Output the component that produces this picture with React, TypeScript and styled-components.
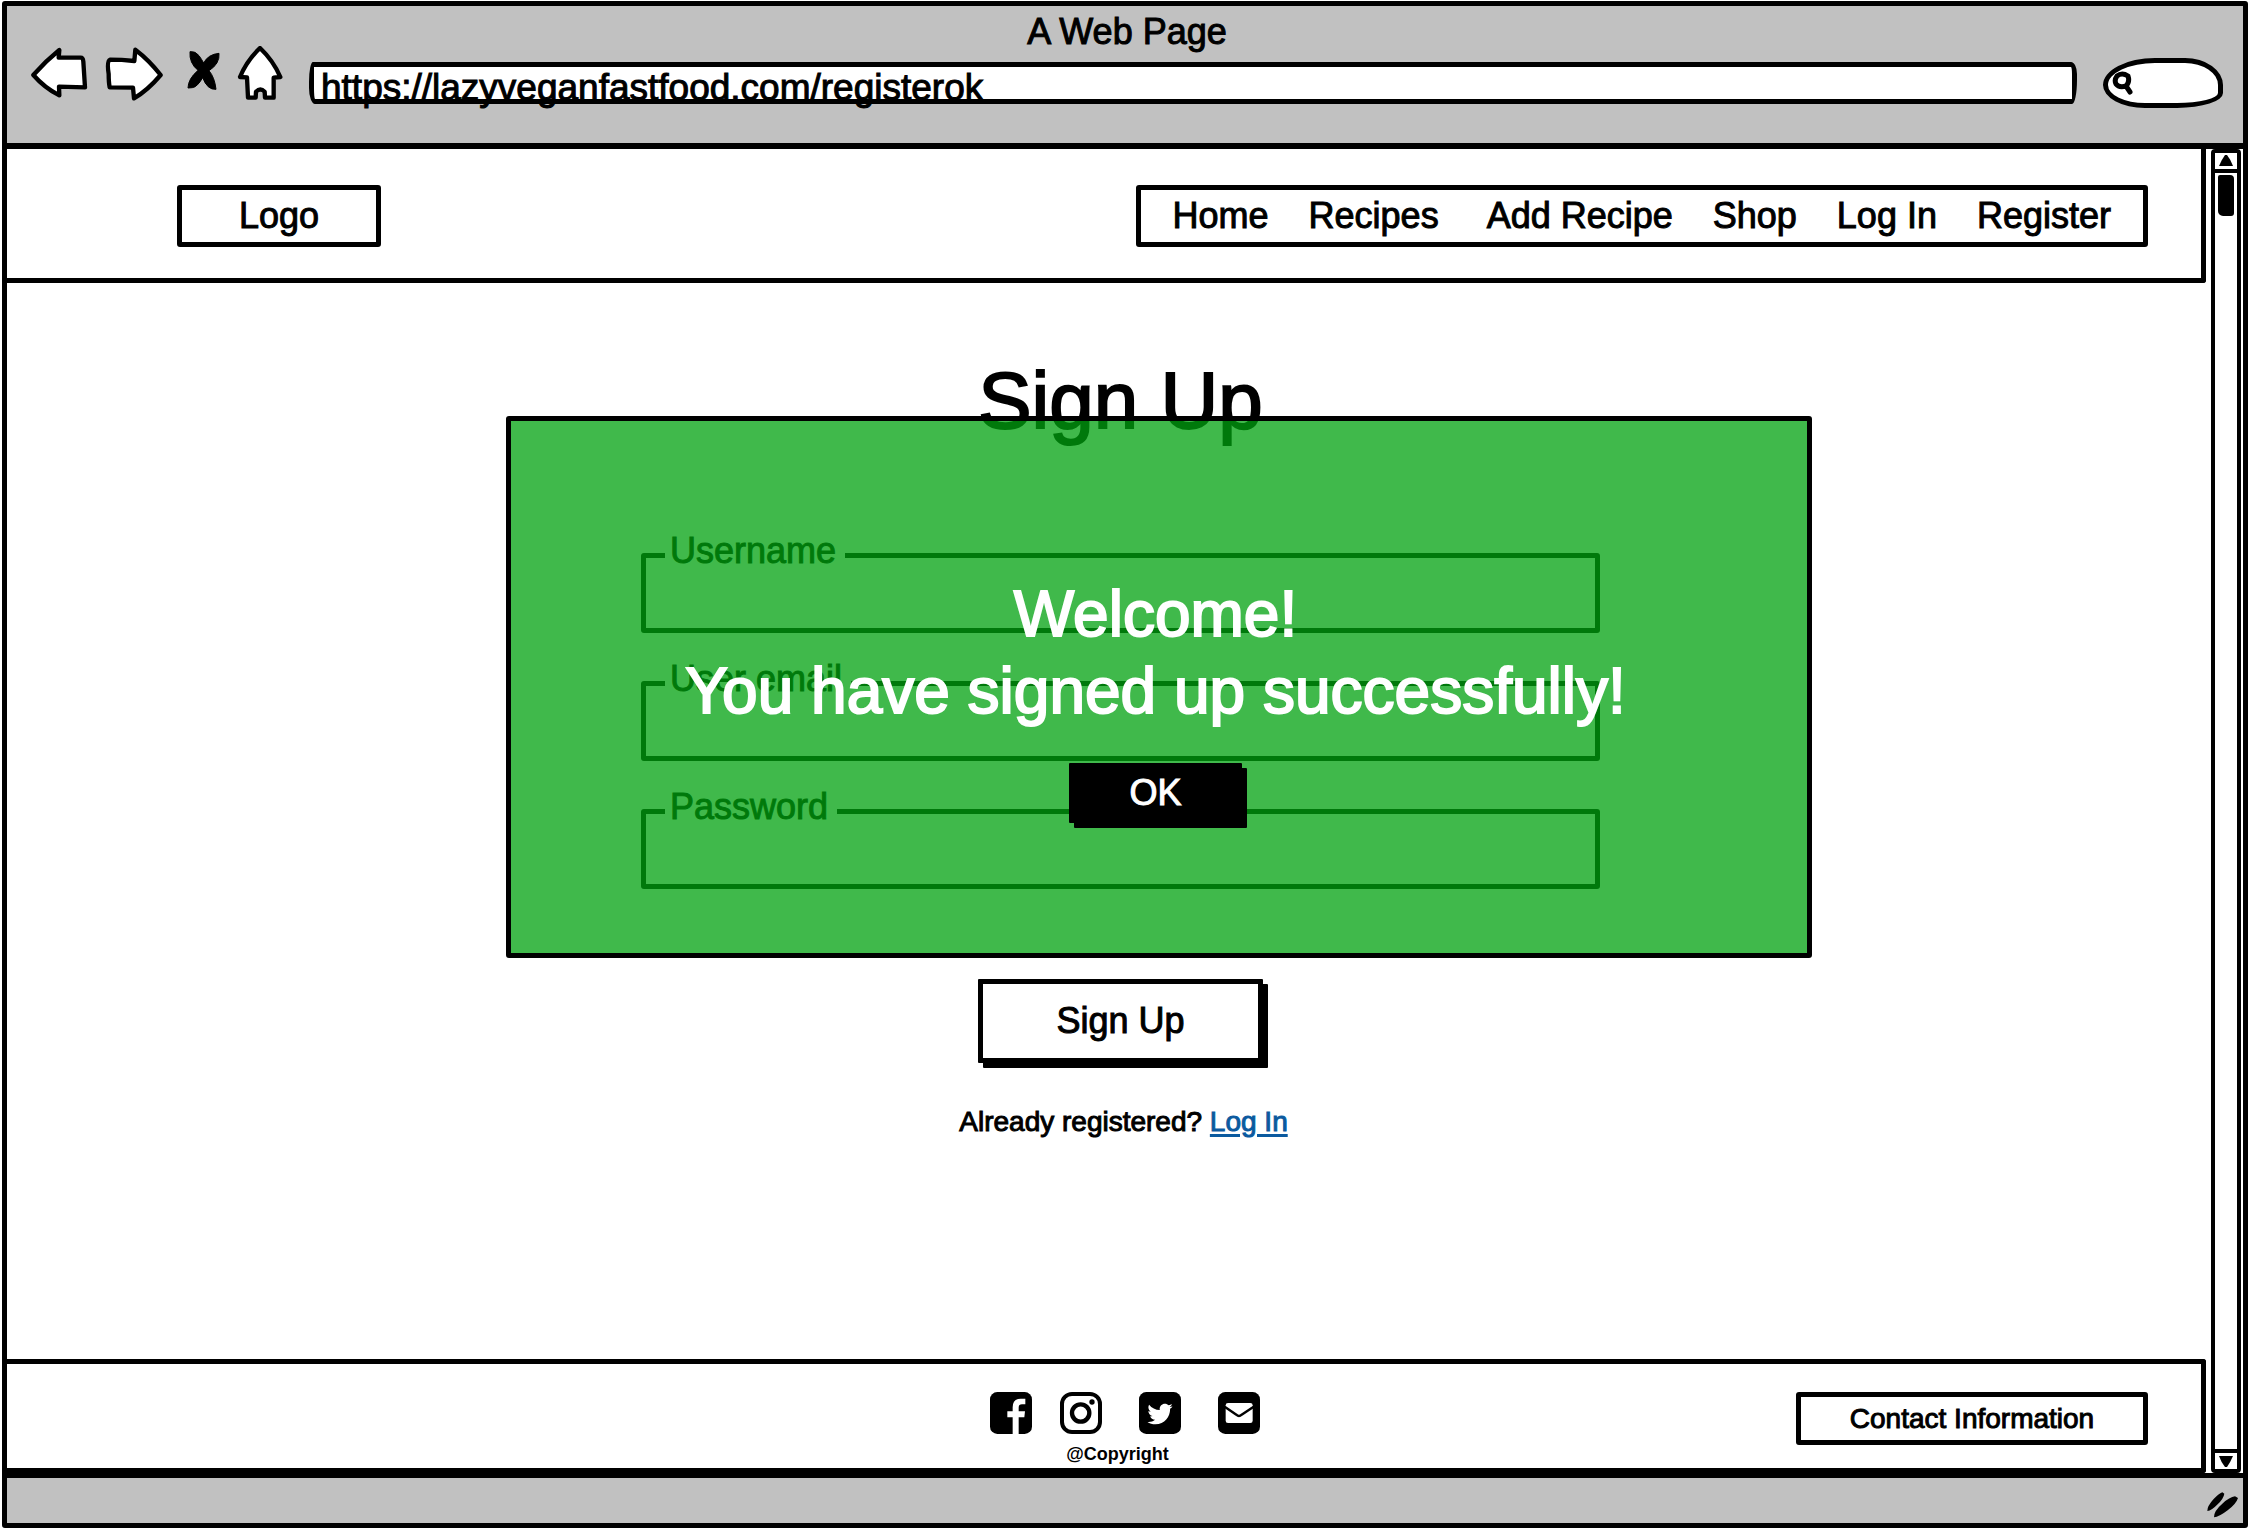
import React from "react";
import styled, { createGlobalStyle } from "styled-components";

const INK = "#000000";
const CHROME = "#c1c1c1";
const LINE = "5px solid " + INK;

const GlobalStyle = createGlobalStyle`
  *, *::before, *::after { box-sizing: border-box; }
  body {
    margin: 0;
    background: #ffffff;
    color: ${INK};
    font-family: "Liberation Sans", Arial, sans-serif;
    font-size: 36px;
    -webkit-text-stroke: 1px currentColor;
  }
  button, input { font: inherit; color: inherit; }
  svg { display: block; }
`;

const Page = styled.div`
  min-height: 100vh;
  padding: 1px 2px 2px;
  display: flex;
  flex-direction: column;
`;

const BrowserWindow = styled.div`
  flex: 1;
  display: flex;
  flex-direction: column;
  border: ${LINE};
  border-radius: 3px;
`;

/* ---------- browser chrome ---------- */

const Chrome = styled.div`
  display: grid;
  grid-template-columns: auto 1fr auto;
  grid-template-rows: 52px 50px;
  column-gap: 26px;
  align-items: center;
  padding: 0 20px 35px 24px;
  background: ${CHROME};
  border-bottom: 6px solid ${INK};
`;

const WindowTitle = styled.div`
  grid-column: 1 / -1;
  grid-row: 1;
  text-align: center;
  line-height: 52px;
`;

const Controls = styled.div`
  grid-column: 1;
  grid-row: 1 / 3;
  display: flex;
  gap: 16px;
  margin-top: 34px;
`;

const IconButton = styled.button`
  padding: 0;
  border: 0;
  background: none;
  cursor: pointer;
`;

const AddressBar = styled.div`
  grid-column: 2;
  grid-row: 2;
  height: 42px;
  border: ${LINE};
  border-radius: 4px 6px 5px 6px / 20px 12px 24px 16px;
  background: #ffffff;
`;

const AddressInput = styled.input`
  display: block;
  width: 100%;
  height: 42px;
  padding: 0 0 0 7px;
  border: 0;
  outline: 0;
  background: transparent;
  font-size: 37px;
  -webkit-text-stroke: inherit;
`;

const SearchPill = styled.label`
  grid-column: 3;
  grid-row: 2;
  width: 120px;
  height: 50px;
  padding: 0 12px 0 4px;
  display: flex;
  align-items: center;
  border: ${LINE};
  border-radius: 52px 38px 46px 42px / 27px 27px 15px 23px;
  background: #ffffff;
`;

const SearchInput = styled.input`
  flex: 1;
  min-width: 0;
  border: 0;
  outline: 0;
  padding: 0;
  background: transparent;
  font-size: 18px;
`;

/* ---------- viewport ---------- */

const Viewport = styled.div`
  flex: 1;
  display: flex;
`;

const Site = styled.div`
  flex: 1;
  display: flex;
  flex-direction: column;
`;

const Header = styled.header`
  display: flex;
  justify-content: space-between;
  padding: 36px 53px 31px 170px;
  border-right: ${LINE};
  border-bottom: ${LINE};
  border-radius: 0 0 3px 0;
`;

const OutlineLink = styled.a<{ $width: number; $height: number; $size: number }>`
  width: ${(p) => p.$width}px;
  height: ${(p) => p.$height}px;
  display: flex;
  align-items: center;
  justify-content: center;
  border: ${LINE};
  border-radius: 3px;
  color: inherit;
  font-size: ${(p) => p.$size}px;
  text-decoration: none;
`;

const Nav = styled.nav`
  display: flex;
  align-items: center;
  gap: 48px;
  padding: 0 32px;
  border: ${LINE};
  border-radius: 3px;
`;

const NavGroup = styled.div`
  display: flex;
  gap: 40px;
`;

const NavLink = styled.a`
  color: inherit;
  text-decoration: none;
  white-space: nowrap;
`;

const Main = styled.main`
  position: relative;
  flex: 1;
  display: flex;
  flex-direction: column;
  align-items: center;
  padding: 72px 0 0 28px;
`;

const Heading = styled.h1`
  margin: 0;
  font-size: 80px;
  font-weight: 400;
  line-height: 92px;
  -webkit-text-stroke-width: 2px;
`;

const Form = styled.form`
  width: 959px;
  max-width: 100%;
  margin-top: 106px;
  display: flex;
  flex-direction: column;
  align-items: center;
  gap: 48px;
`;

const Field = styled.div`
  position: relative;
  width: 100%;
  height: 80px;
  border: ${LINE};
  border-radius: 3px;
`;

const FieldLabel = styled.label`
  position: absolute;
  top: -25px;
  left: 19px;
  padding: 0 9px 0 5px;
  background: #ffffff;
  line-height: 36px;
`;

const FieldInput = styled.input`
  width: 100%;
  height: 100%;
  padding: 8px 24px 0;
  border: 0;
  outline: 0;
  background: transparent;
`;

const SketchButton = styled.button<{ $solid?: boolean }>`
  width: ${(p) => (p.$solid ? 173 : 285)}px;
  height: ${(p) => (p.$solid ? 60 : 84)}px;
  padding: 0;
  border: ${LINE};
  border-radius: 1px;
  box-shadow: 5px 5px 0 ${INK};
  background: ${(p) => (p.$solid ? INK : "#ffffff")};
  color: ${(p) => (p.$solid ? "#ffffff" : INK)};
  -webkit-text-stroke: 1px currentColor;
  cursor: pointer;
`;

const SubmitRow = styled.div`
  margin-top: 42px;
`;

const Hint = styled.p`
  margin: 43px 0 0;
  padding-left: 6px;
  font-size: 28px;
  line-height: 32px;

  a {
    color: #0b5a9f;
    -webkit-text-stroke-color: #0b5a9f;
    text-decoration-thickness: 3px;
    text-underline-offset: 3px;
  }
`;

const Dialog = styled.section`
  position: absolute;
  top: 133px;
  left: calc(50% + 52px);
  transform: translateX(-50%);
  width: 1306px;
  max-width: 100%;
  height: 542px;
  padding: 155px 6px 0 0;
  display: flex;
  flex-direction: column;
  align-items: center;
  gap: 33px;
  border: ${LINE};
  border-radius: 3px;
  background: rgba(0, 161, 15, 0.75);
`;

const DialogText = styled.p`
  margin: 0;
  color: #ffffff;
  font-size: 64px;
  line-height: 77px;
  text-align: center;
  -webkit-text-stroke: 2px #ffffff;
`;

const Footer = styled.footer`
  display: grid;
  grid-template-columns: 1fr auto 1fr;
  align-items: start;
  padding: 28px 53px 4px 94px;
  border: ${LINE};
  border-left: 0;
  border-radius: 0 3px 3px 0;
`;

const FooterCenter = styled.div`
  grid-column: 2;
  display: flex;
  flex-direction: column;
  align-items: center;
  gap: 10px;
`;

const FooterEnd = styled.div`
  justify-self: end;
`;

const SocialGroup = styled.div<{ $gap: number }>`
  display: flex;
  gap: ${(p) => p.$gap}px;
`;

const SocialLink = styled.a`
  color: inherit;
`;

const Copyright = styled.small`
  padding-right: 14px;
  font-size: 18px;
  font-weight: 700;
  line-height: 20px;
  -webkit-text-stroke-width: 0;
`;

/* ---------- scrollbar and status bar ---------- */

const Scrollbar = styled.div`
  width: 30px;
  margin: 0 2px 0 5px;
  display: flex;
  flex-direction: column;
  align-items: center;
  border: 4px solid ${INK};
  border-radius: 4px;
`;

const ScrollButton = styled.button<{ $end?: boolean }>`
  width: 100%;
  height: 20px;
  padding: 0;
  display: flex;
  align-items: center;
  justify-content: center;
  border: 0 solid ${INK};
  border-width: ${(p) => (p.$end ? "4px 0 0" : "0 0 4px")};
  background: #ffffff;
`;

const ScrollTrack = styled.div`
  flex: 1;
  padding-top: 2px;
`;

const ScrollThumb = styled.div`
  width: 16px;
  height: 41px;
  border-radius: 2px 4px 3px 5px;
  background: ${INK};
`;

const StatusBar = styled.div`
  height: 50px;
  display: flex;
  justify-content: flex-end;
  align-items: flex-end;
  padding: 0 5px 5px 0;
  border-top: ${LINE};
  background: ${CHROME};
`;

/* ---------- drawings ---------- */

const controlIcons = [
  {
    name: "Back",
    width: 57,
    box: "21 31 171 168",
    path: "M28 118 Q65 76 106 43 L104 66 L170 66 Q177 66 178 78 L183 155 L105 153 L106 179 Q62 157 28 118Z",
  },
  {
    name: "Forward",
    width: 59,
    box: "240 31 177 168",
    path: "M258 72 Q292 72 331 76 L334 42 Q375 73 410 118 Q370 165 330 188 L327 156 L257 155 Q254 140 254 115 Q248 76 258 72Z",
  },
  {
    name: "Stop",
    width: 42,
    box: "465 31 126 168",
    solid: true,
    path: "M498 48 Q514 46 525 60 Q533 71 539 82 Q552 56 585 53 Q588 84 555 105 Q572 125 576 161 Q550 163 536 126 Q520 154 505 156 L492 157 Q492 130 522 104 Q495 82 498 48Z",
  },
  {
    name: "Home",
    width: 46,
    box: "639 31 138 168",
    path: "M708 37 Q748 75 769 124 L749 126 L749 186 L723 186 L722 168 Q709 155 696 168 L695 186 L672 186 L669 125 L648 124 Q668 75 708 37Z",
  },
];

const MagnifierIcon = () => (
  <svg width="22" height="24" viewBox="0 0 22 24" fill="none" stroke={INK} strokeWidth="5" strokeLinecap="round">
    <path d="M5 5 Q10 1 16 5 Q18 11 14 15 Q7 17 4 13 Q2 9 5 5Z M14 15 L18 21" />
  </svg>
);

const Triangle = ({ down }: { down?: boolean }) => (
  <svg width="14" height="12" viewBox="0 0 14 12" fill={INK}>
    <path d={down ? "M0 1 H14 Q11 8 8 12 H6 Q2 7 0 1Z" : "M0 11 Q3 4 6 0 H8 Q12 5 14 11Z"} />
  </svg>
);

const GripIcon = () => (
  <svg width="31" height="26" viewBox="0 0 93 76" fill={INK}>
    <path d="M1 56 Q0 42 20 20 Q38 2 46 0 L52 4 Q50 18 32 36 Q14 55 1 56Z" />
    <path d="M21 75 Q20 56 46 34 Q68 14 84 12 L93 17 Q88 34 62 54 Q36 74 21 75Z" />
  </svg>
);

const FacebookIcon = () => (
  <svg width="42" height="42" viewBox="0 0 126 126">
    <rect width="126" height="126" rx="22" fill={INK} />
    <path
      fill="#ffffff"
      d="M68 126 V76 H52 V58 H68 V46 Q68 20 92 20 H106 V37 H96 Q86 37 86 47 V58 H105 L103 76 H86 V126Z"
    />
  </svg>
);

const InstagramIcon = () => (
  <svg width="42" height="42" viewBox="0 0 126 126" fill="none" stroke={INK}>
    <rect x="6" y="6" width="114" height="114" rx="30" strokeWidth="12" />
    <circle cx="62" cy="63" r="26" strokeWidth="13" />
    <circle cx="96" cy="30" r="8" fill={INK} stroke="none" />
  </svg>
);

const TwitterIcon = () => (
  <svg width="42" height="42" viewBox="0 0 126 126">
    <rect width="126" height="126" rx="22" fill={INK} />
    <svg x="25" y="28" width="76" height="76" viewBox="0 0 512 512">
      <path
        fill="#ffffff"
        d="M459.37 151.716c.325 4.548.325 9.097.325 13.645 0 138.72-105.583 298.558-298.558 298.558-59.452 0-114.68-17.219-161.137-47.106 8.447.974 16.568 1.299 25.34 1.299 49.055 0 94.213-16.568 130.274-44.832-46.132-.975-84.792-31.188-98.112-72.772 6.498.974 12.995 1.624 19.818 1.624 9.421 0 18.843-1.3 27.614-3.573-48.081-9.747-84.143-51.98-84.143-102.985v-1.299c13.969 7.797 30.214 12.67 47.431 13.319-28.264-18.843-46.781-51.005-46.781-87.391 0-19.492 5.197-37.36 14.294-52.954 51.655 63.675 129.3 105.258 216.365 109.807-1.624-7.797-2.599-15.918-2.599-24.04 0-57.828 46.782-104.934 104.934-104.934 30.213 0 57.502 12.67 76.67 33.137 23.715-4.548 46.456-13.32 66.599-25.34-7.798 24.366-24.366 44.833-46.132 57.827 21.117-2.273 41.584-8.122 60.426-16.243-14.292 20.791-32.161 39.308-52.628 54.253z"
      />
    </svg>
  </svg>
);

const MailIcon = () => (
  <svg width="42" height="42" viewBox="0 0 126 126">
    <rect width="126" height="126" rx="22" fill={INK} />
    <rect x="23" y="33" width="81" height="60" rx="7" fill="#ffffff" />
    <path d="M20 44 L55 68 Q63 76 71 68 L107 44" fill="none" stroke={INK} strokeWidth="7" />
  </svg>
);

/* ---------- page ---------- */

const navGroups = [
  ["Home", "Recipes"],
  ["Add Recipe", "Shop", "Log In", "Register"],
];

const fields = [
  { id: "username", label: "Username", type: "text" },
  { id: "email", label: "User email", type: "email" },
  { id: "password", label: "Password", type: "password" },
];

export default function App() {
  return (
    <Page>
      <GlobalStyle />
      <BrowserWindow>
        <Chrome>
          <WindowTitle>A Web Page</WindowTitle>
          <Controls>
            {controlIcons.map((icon) => (
              <IconButton key={icon.name} type="button" aria-label={icon.name}>
                <svg width={icon.width} height="56" viewBox={icon.box}>
                  <path
                    d={icon.path}
                    fill={icon.solid ? INK : "#ffffff"}
                    stroke={INK}
                    strokeWidth={icon.solid ? 3 : 13}
                    strokeLinejoin="round"
                  />
                </svg>
              </IconButton>
            ))}
          </Controls>
          <AddressBar>
            <AddressInput
              type="text"
              aria-label="Address"
              defaultValue="https://lazyveganfastfood.com/registerok"
            />
          </AddressBar>
          <SearchPill>
            <MagnifierIcon />
            <SearchInput type="search" aria-label="Search" />
          </SearchPill>
        </Chrome>

        <Viewport>
          <Site>
            <Header>
              <OutlineLink href="#home" $width={204} $height={62} $size={36}>
                Logo
              </OutlineLink>
              <Nav>
                {navGroups.map((group) => (
                  <NavGroup key={group[0]}>
                    {group.map((item) => (
                      <NavLink key={item} href="#nav">
                        {item}
                      </NavLink>
                    ))}
                  </NavGroup>
                ))}
              </Nav>
            </Header>

            <Main>
              <Heading>Sign Up</Heading>
              <Form onSubmit={(e) => e.preventDefault()}>
                {fields.map((field) => (
                  <Field key={field.id}>
                    <FieldLabel htmlFor={field.id}>{field.label}</FieldLabel>
                    <FieldInput id={field.id} type={field.type} />
                  </Field>
                ))}
                <SubmitRow>
                  <SketchButton type="submit">Sign Up</SketchButton>
                </SubmitRow>
              </Form>
              <Hint>
                Already registered? <a href="#login">Log In</a>
              </Hint>
              <Dialog role="dialog" aria-label="Welcome">
                <DialogText>
                  Welcome!
                  <br />
                  You have signed up successfully!
                </DialogText>
                <SketchButton type="button" $solid>
                  OK
                </SketchButton>
              </Dialog>
            </Main>

            <Footer>
              <FooterCenter>
                <SocialGroup $gap={37}>
                  <SocialGroup $gap={28}>
                    <SocialLink href="#facebook" aria-label="Facebook">
                      <FacebookIcon />
                    </SocialLink>
                    <SocialLink href="#instagram" aria-label="Instagram">
                      <InstagramIcon />
                    </SocialLink>
                  </SocialGroup>
                  <SocialLink href="#twitter" aria-label="Twitter">
                    <TwitterIcon />
                  </SocialLink>
                  <SocialLink href="#mail" aria-label="Email">
                    <MailIcon />
                  </SocialLink>
                </SocialGroup>
                <Copyright>@Copyright</Copyright>
              </FooterCenter>
              <FooterEnd>
                <OutlineLink href="#contact" $width={352} $height={53} $size={28}>
                  Contact Information
                </OutlineLink>
              </FooterEnd>
            </Footer>
          </Site>

          <Scrollbar>
            <ScrollButton type="button" aria-label="Scroll up">
              <Triangle />
            </ScrollButton>
            <ScrollTrack>
              <ScrollThumb />
            </ScrollTrack>
            <ScrollButton type="button" aria-label="Scroll down" $end>
              <Triangle down />
            </ScrollButton>
          </Scrollbar>
        </Viewport>

        <StatusBar>
          <GripIcon />
        </StatusBar>
      </BrowserWindow>
    </Page>
  );
}
